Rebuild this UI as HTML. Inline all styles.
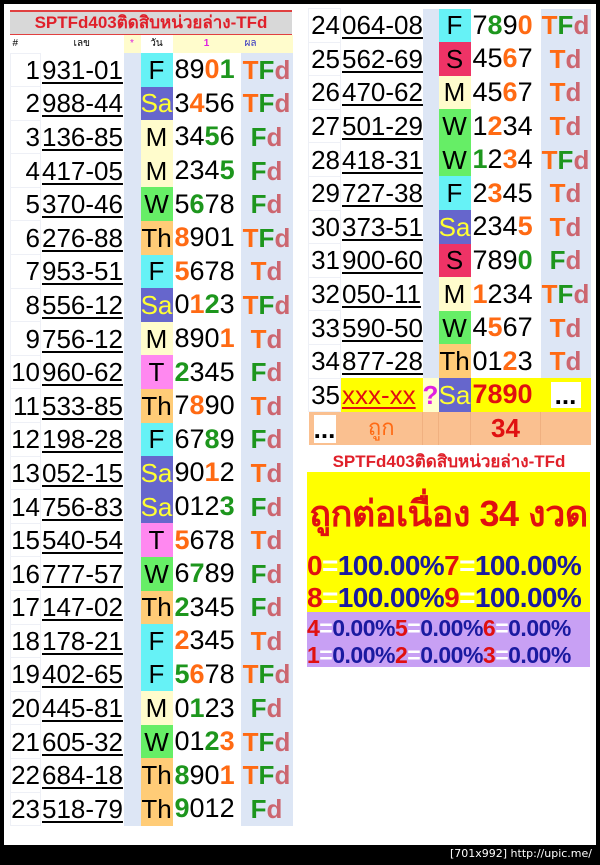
<!DOCTYPE html>
<html><head><meta charset="utf-8"><style>
*{margin:0;padding:0;box-sizing:border-box}
body{width:600px;height:865px;background:#000;position:relative;overflow:hidden;font-family:"Liberation Sans","Noto Sans CJK SC",sans-serif}
#page{position:absolute;left:4px;top:4px;width:592px;height:841px;background:#fff}
table{border-collapse:collapse;table-layout:fixed;position:absolute}
td{padding:0;white-space:nowrap;overflow:hidden;line-height:1}
.r td{height:33.6px;font-size:26px;vertical-align:middle}
.n{text-align:right;border:1px solid #eef0f6;background:#fff}
.num{text-align:left;text-decoration:underline;text-decoration-thickness:2px;text-underline-offset:3px;padding-left:1px!important}
.st{background:#dde6f5}
.dy{text-align:center}
.dg{text-align:left;padding-left:2px!important;font-size:27px!important}
.rs{background:#dde6f5;text-align:center;font-weight:bold}
.g{color:#1d961d;font-weight:bold}.o{color:#ff6a13;font-weight:bold}.d{color:#cc6670}
.F{background:#66f2f6}.Sa{background:#6666cc;color:#ffff33}.M{background:#fffccc}.W{background:#66ee66}.Th{background:#ffcc77}.T{background:#ff88f0}.S{background:#ee3366}
.title{color:#e0202a;font-weight:bold;font-size:17px}
.pl{font-weight:bold;color:#1a1aa0;white-space:nowrap;position:absolute;left:0}
.pl b{color:#e01010}.pl i{color:#fff;font-style:normal}
</style></head><body>
<div id="page"></div>
<!-- left -->
<div style="position:absolute;left:10px;top:10px;width:282px;height:25px;background:#d8d8d8;border-top:2px solid #e04040;border-bottom:1px solid #e04040" class="title"><div style="text-align:center;line-height:22px">SPTFd403ติดสิบหน่วยล่าง-TFd</div></div>
<table style="left:10px;top:35px;width:282px">
<colgroup><col style="width:30px"><col style="width:83px"><col style="width:17px"><col style="width:32px"><col style="width:68px"><col style="width:52px"></colgroup>
<tr style="height:18px;font-size:10px"><td style="padding-left:2px">#</td><td style="text-align:center">เลข</td><td style="background:#fffccc;color:#e020e0;text-align:center">*</td><td style="text-align:center">วัน</td><td style="background:#fffccc;color:#e020e0;text-align:center;font-weight:bold">1</td><td style="background:#fffccc;color:#3030c0;padding-left:4px">ผล</td></tr>
<tr class="r"><td class="n">1</td><td class="num">931-01</td><td class="st"></td><td class="dy F">F</td><td class="dg">89<span class="o">0</span><span class="g">1</span></td><td class="rs"><span class="o">T</span><span class="g">F</span><span class="d">d</span></td></tr>
<tr class="r"><td class="n">2</td><td class="num">988-44</td><td class="st"></td><td class="dy Sa">Sa</td><td class="dg">3<span class="o">4</span>56</td><td class="rs"><span class="o">T</span><span class="g">F</span><span class="d">d</span></td></tr>
<tr class="r"><td class="n">3</td><td class="num">136-85</td><td class="st"></td><td class="dy M">M</td><td class="dg">34<span class="g">5</span>6</td><td class="rs"><span class="g">F</span><span class="d">d</span></td></tr>
<tr class="r"><td class="n">4</td><td class="num">417-05</td><td class="st"></td><td class="dy M">M</td><td class="dg">234<span class="g">5</span></td><td class="rs"><span class="g">F</span><span class="d">d</span></td></tr>
<tr class="r"><td class="n">5</td><td class="num">370-46</td><td class="st"></td><td class="dy W">W</td><td class="dg">5<span class="g">6</span>78</td><td class="rs"><span class="g">F</span><span class="d">d</span></td></tr>
<tr class="r"><td class="n">6</td><td class="num">276-88</td><td class="st"></td><td class="dy Th">Th</td><td class="dg"><span class="o">8</span>901</td><td class="rs"><span class="o">T</span><span class="g">F</span><span class="d">d</span></td></tr>
<tr class="r"><td class="n">7</td><td class="num">953-51</td><td class="st"></td><td class="dy F">F</td><td class="dg"><span class="o">5</span>678</td><td class="rs"><span class="o">T</span><span class="d">d</span></td></tr>
<tr class="r"><td class="n">8</td><td class="num">556-12</td><td class="st"></td><td class="dy Sa">Sa</td><td class="dg">0<span class="o">1</span><span class="g">2</span>3</td><td class="rs"><span class="o">T</span><span class="g">F</span><span class="d">d</span></td></tr>
<tr class="r"><td class="n">9</td><td class="num">756-12</td><td class="st"></td><td class="dy M">M</td><td class="dg">890<span class="o">1</span></td><td class="rs"><span class="o">T</span><span class="d">d</span></td></tr>
<tr class="r"><td class="n">10</td><td class="num">960-62</td><td class="st"></td><td class="dy T">T</td><td class="dg"><span class="g">2</span>345</td><td class="rs"><span class="g">F</span><span class="d">d</span></td></tr>
<tr class="r"><td class="n">11</td><td class="num">533-85</td><td class="st"></td><td class="dy Th">Th</td><td class="dg">7<span class="o">8</span>90</td><td class="rs"><span class="o">T</span><span class="d">d</span></td></tr>
<tr class="r"><td class="n">12</td><td class="num">198-28</td><td class="st"></td><td class="dy F">F</td><td class="dg">67<span class="g">8</span>9</td><td class="rs"><span class="g">F</span><span class="d">d</span></td></tr>
<tr class="r"><td class="n">13</td><td class="num">052-15</td><td class="st"></td><td class="dy Sa">Sa</td><td class="dg">90<span class="o">1</span>2</td><td class="rs"><span class="o">T</span><span class="d">d</span></td></tr>
<tr class="r"><td class="n">14</td><td class="num">756-83</td><td class="st"></td><td class="dy Sa">Sa</td><td class="dg">012<span class="g">3</span></td><td class="rs"><span class="g">F</span><span class="d">d</span></td></tr>
<tr class="r"><td class="n">15</td><td class="num">540-54</td><td class="st"></td><td class="dy T">T</td><td class="dg"><span class="o">5</span>678</td><td class="rs"><span class="o">T</span><span class="d">d</span></td></tr>
<tr class="r"><td class="n">16</td><td class="num">777-57</td><td class="st"></td><td class="dy W">W</td><td class="dg">6<span class="g">7</span>89</td><td class="rs"><span class="g">F</span><span class="d">d</span></td></tr>
<tr class="r"><td class="n">17</td><td class="num">147-02</td><td class="st"></td><td class="dy Th">Th</td><td class="dg"><span class="g">2</span>345</td><td class="rs"><span class="g">F</span><span class="d">d</span></td></tr>
<tr class="r"><td class="n">18</td><td class="num">178-21</td><td class="st"></td><td class="dy F">F</td><td class="dg"><span class="o">2</span>345</td><td class="rs"><span class="o">T</span><span class="d">d</span></td></tr>
<tr class="r"><td class="n">19</td><td class="num">402-65</td><td class="st"></td><td class="dy F">F</td><td class="dg"><span class="g">5</span><span class="o">6</span>78</td><td class="rs"><span class="o">T</span><span class="g">F</span><span class="d">d</span></td></tr>
<tr class="r"><td class="n">20</td><td class="num">445-81</td><td class="st"></td><td class="dy M">M</td><td class="dg">0<span class="g">1</span>23</td><td class="rs"><span class="g">F</span><span class="d">d</span></td></tr>
<tr class="r"><td class="n">21</td><td class="num">605-32</td><td class="st"></td><td class="dy W">W</td><td class="dg">01<span class="g">2</span><span class="o">3</span></td><td class="rs"><span class="o">T</span><span class="g">F</span><span class="d">d</span></td></tr>
<tr class="r"><td class="n">22</td><td class="num">684-18</td><td class="st"></td><td class="dy Th">Th</td><td class="dg"><span class="g">8</span>90<span class="o">1</span></td><td class="rs"><span class="o">T</span><span class="g">F</span><span class="d">d</span></td></tr>
<tr class="r"><td class="n">23</td><td class="num">518-79</td><td class="st"></td><td class="dy Th">Th</td><td class="dg"><span class="g">9</span>012</td><td class="rs"><span class="g">F</span><span class="d">d</span></td></tr>
</table>
<!-- right -->
<table style="left:308px;top:8px;width:282px">
<colgroup><col style="width:32px"><col style="width:82px"><col style="width:16px"><col style="width:32px"><col style="width:70px"><col style="width:50px"></colgroup>
<tr class="r"><td class="n">24</td><td class="num">064-08</td><td class="st"></td><td class="dy F">F</td><td class="dg">7<span class="g">8</span>9<span class="o">0</span></td><td class="rs"><span class="o">T</span><span class="g">F</span><span class="d">d</span></td></tr>
<tr class="r"><td class="n">25</td><td class="num">562-69</td><td class="st"></td><td class="dy S">S</td><td class="dg">45<span class="o">6</span>7</td><td class="rs"><span class="o">T</span><span class="d">d</span></td></tr>
<tr class="r"><td class="n">26</td><td class="num">470-62</td><td class="st"></td><td class="dy M">M</td><td class="dg">45<span class="o">6</span>7</td><td class="rs"><span class="o">T</span><span class="d">d</span></td></tr>
<tr class="r"><td class="n">27</td><td class="num">501-29</td><td class="st"></td><td class="dy W">W</td><td class="dg">1<span class="o">2</span>34</td><td class="rs"><span class="o">T</span><span class="d">d</span></td></tr>
<tr class="r"><td class="n">28</td><td class="num">418-31</td><td class="st"></td><td class="dy W">W</td><td class="dg"><span class="g">1</span>2<span class="o">3</span>4</td><td class="rs"><span class="o">T</span><span class="g">F</span><span class="d">d</span></td></tr>
<tr class="r"><td class="n">29</td><td class="num">727-38</td><td class="st"></td><td class="dy F">F</td><td class="dg">2<span class="o">3</span>45</td><td class="rs"><span class="o">T</span><span class="d">d</span></td></tr>
<tr class="r"><td class="n">30</td><td class="num">373-51</td><td class="st"></td><td class="dy Sa">Sa</td><td class="dg">234<span class="o">5</span></td><td class="rs"><span class="o">T</span><span class="d">d</span></td></tr>
<tr class="r"><td class="n">31</td><td class="num">900-60</td><td class="st"></td><td class="dy S">S</td><td class="dg">789<span class="g">0</span></td><td class="rs"><span class="g">F</span><span class="d">d</span></td></tr>
<tr class="r"><td class="n">32</td><td class="num">050-11</td><td class="st"></td><td class="dy M">M</td><td class="dg"><span class="o">1</span>234</td><td class="rs"><span class="o">T</span><span class="g">F</span><span class="d">d</span></td></tr>
<tr class="r"><td class="n">33</td><td class="num">590-50</td><td class="st"></td><td class="dy W">W</td><td class="dg">4<span class="o">5</span>67</td><td class="rs"><span class="o">T</span><span class="d">d</span></td></tr>
<tr class="r"><td class="n">34</td><td class="num">877-28</td><td class="st"></td><td class="dy Th">Th</td><td class="dg">01<span class="o">2</span>3</td><td class="rs"><span class="o">T</span><span class="d">d</span></td></tr>
<tr class="r"><td class="n">35</td><td class="num" style="background:#ffff00;color:#e01010;text-decoration-color:#e01010">xxx-xx</td><td style="background:#ffffcc;color:#e020e0;font-weight:bold;text-align:center">?</td><td class="dy Sa">Sa</td><td class="dg" style="background:#ffff00;color:#e01010;font-weight:bold">7890</td><td style="background:#ffff00;text-align:center"><span style="background:#fff;display:inline-block;width:30px;font-weight:bold;line-height:26px">...</span></td></tr>
<tr class="r" style="background:#fac090"><td style="text-align:center"><span style="background:#fff;display:inline-block;width:22px;line-height:28px;font-weight:bold">...</span></td><td style="text-align:center;color:#ff6a13;font-size:22px">ถูก</td><td style="border-left:1px solid #f0b080"></td><td style="border-left:1px solid #f0b080"></td><td style="text-align:center;color:#e01010;font-weight:bold;border-left:1px solid #f0b080">34</td><td style="border-left:1px solid #f0b080"></td></tr>
</table>
<div class="title" style="position:absolute;left:308px;top:452px;width:282px;text-align:center;line-height:20px">SPTFd403ติดสิบหน่วยล่าง-TFd</div>
<div style="position:absolute;left:307px;top:472px;width:283px;height:140px;background:#ffff00">
 <div style="position:absolute;left:0;top:20px;width:283px;text-align:center;color:#e01010;font-weight:bold;font-size:36px;line-height:44px;letter-spacing:-0.5px">ถูกต่อเนื่อง 34 งวด</div>
 <div class="pl" style="top:78px;font-size:28px;letter-spacing:-0.6px"><b>0</b><i>=</i>100.00%<b>7</b><i>=</i>100.00%</div>
 <div class="pl" style="top:110px;font-size:28px;letter-spacing:-0.6px"><b>8</b><i>=</i>100.00%<b>9</b><i>=</i>100.00%</div>
</div>
<div style="position:absolute;left:307px;top:612px;width:283px;height:55px;background:#c8a0f4">
 <div class="pl" style="top:3px;font-size:23px;letter-spacing:-0.5px"><b>4</b><i>=</i>0.00%<b>5</b><i>=</i>0.00%<b>6</b><i>=</i>0.00%</div>
 <div class="pl" style="top:30px;font-size:23px;letter-spacing:-0.5px"><b>1</b><i>=</i>0.00%<b>2</b><i>=</i>0.00%<b>3</b><i>=</i>0.00%</div>
</div>
<div style="position:absolute;right:8px;top:847px;color:#fff;font-size:11px;font-family:'DejaVu Sans',sans-serif">[701x992] http://upic.me/</div>
</body></html>
